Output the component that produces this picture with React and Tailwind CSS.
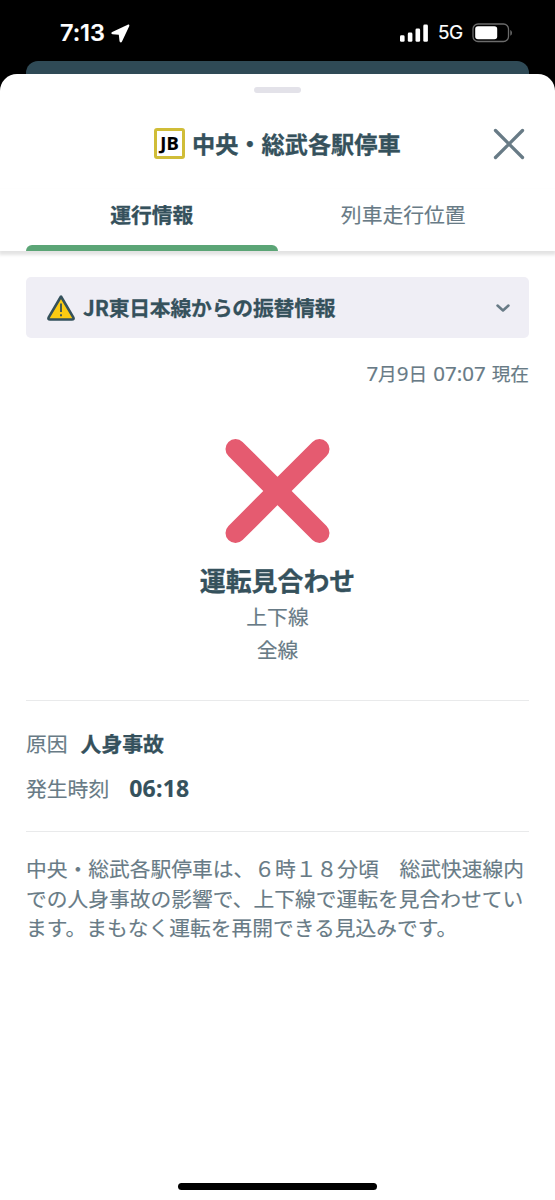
const SERVICE = {
  code: "JB",
  name: "中央・総武各駅停車",
  status: "運転見合わせ",
  direction: "上下線",
  section: "全線",
  cause: "人身事故",
  time: "06:18",
  detail:
    "中央・総武各駅停車は、６時１８分頃　総武快速線内での人身事故の影響で、上下線で運転を見合わせています。まもなく運転を再開できる見込みです。",
};

function StatusBar() {
  return (
    <div className="h-[61px] shrink-0 flex items-start justify-between pl-[60px] pr-[41px] pt-[21px] text-white font-['Inter','Liberation_Sans',sans-serif]">
      <div className="flex items-center h-6 gap-[6px]">
        <span className="w-[45px] text-[23.5px] font-semibold leading-6 tracking-[-0.1px] whitespace-nowrap">7:13</span>
        <svg className="w-[19px] h-[19px]" viewBox="0 0 19 19" fill="currentColor">
          <path d="M16.700.7 1.200 7.900C-.1 8.600.2 10 1.500 10.200L7.800 10.700 8.500 17c.2 1.600 1.800 1.900 2.500.5L18.200 2.200C18.700 1.100 17.900.2 16.700.7Z" />
        </svg>
      </div>
      <div className="flex items-center h-6">
        <svg className="w-[29px] h-[19px]" viewBox="0 0 29 19" fill="currentColor">
          <rect x="0" y="11.300" width="4.600" height="6.500" rx="1.400" />
          <rect x="7.800" y="8.500" width="4.600" height="9.300" rx="1.400" />
          <rect x="15.500" y="4.500" width="4.600" height="13.300" rx="1.400" />
          <rect x="23.300" y="0.500" width="4.600" height="17.300" rx="1.400" />
        </svg>
        <span className="ml-[9px] text-[19px] leading-6 w-[26px] tracking-[-0.6px]">5G</span>
        <svg className="ml-[8px] w-[42px] h-[20px]" viewBox="0 0 42 20">
          <rect x="1" y="1" width="35.500" height="17.500" rx="5" fill="none" stroke="#6b6b6b" strokeWidth="1.300" />
          <rect x="3.200" y="3.200" width="22" height="13.100" rx="2.800" fill="#fff" />
          <path d="M38.300 7c2.200.8 2.200 5 0 5.800Z" fill="#6b6b6b" />
        </svg>
      </div>
    </div>
  );
}

function SheetHeader() {
  return (
    <div className="relative mt-[32px] h-9 flex items-center pl-[154px]">
      <div className="w-[31px] h-[31px] rounded-[3px] border-[3px] border-[#d0bd38] flex items-center justify-center font-['Noto_Sans',sans-serif] text-[18.500px] leading-none font-bold text-black">
        {SERVICE.code}
      </div>
      <h1 className="ml-[7px] text-[23.2px] leading-9 font-bold text-[#35515c] [-webkit-text-stroke:0.3px]">{SERVICE.name}</h1>
      <button className="absolute right-[30px] top-[3px]" aria-label="閉じる">
        <svg className="w-8 h-8" viewBox="0 0 32 32" fill="none" stroke="#687b86" strokeWidth="3.300" strokeLinecap="round">
          <path d="M2.500 2.500 29.500 29.500M29.500 2.500 2.500 29.500" />
        </svg>
      </button>
    </div>
  );
}

function Tabs() {
  return (
    <div className="mt-[28px] h-[62px] px-[26px] grid grid-cols-2 text-[20.800px] text-center shadow-[0_3px_3px_1px_rgba(0,0,0,0.11)]">
      <button className="flex flex-col items-center justify-between">
        <span className="mt-[9px] leading-8 font-bold text-[#35515c] [-webkit-text-stroke:0.3px]">運行情報</span>
        <span className="w-full h-[6px] rounded-t-[6px] bg-[#5ba576]" />
      </button>
      <button className="flex flex-col items-center">
        <span className="mt-[9px] leading-8 text-[#687b86]">列車走行位置</span>
      </button>
    </div>
  );
}

function TransferBanner() {
  return (
    <button className="mt-[26px] w-full h-[61px] rounded-[5px] bg-[#efeef5] flex items-center pl-5 pr-[18px]">
      <svg className="w-[30px] h-[28px]" viewBox="0 0 30 28">
        <path d="M15 2.500 2.700 23.300c-.8 1.400-.1 2.200 1.300 2.200h22c1.400 0 2.100-.8 1.300-2.200Z" fill="#fbcb13" stroke="#35515c" strokeWidth="2.600" strokeLinejoin="round" />
        <path d="M15 9.500v8.500M15 20.300v2" stroke="#35515c" strokeWidth="1.800" />
      </svg>
      <span className="ml-[7px] -mt-px text-[20.800px] leading-8 tracking-[-0.18px] font-bold text-[#35515c] [-webkit-text-stroke:0.3px]">
        JR東日本線からの振替情報
      </span>
      <svg className="ml-auto w-4 h-4" viewBox="0 0 16 16" fill="none" stroke="#687b86" strokeWidth="2.500" strokeLinecap="round" strokeLinejoin="round">
        <path d="m2.500 5.500 5.500 5 5.500-5" />
      </svg>
    </button>
  );
}

export default function App() {
  return (
    <div className="w-[555px] h-[1200px] bg-black flex flex-col overflow-hidden font-['Noto_Sans_CJK_JP',sans-serif] text-[20.800px] text-[#687b86] [-webkit-text-stroke:0.15px]">
      <StatusBar />
      <div className="mx-[26px] h-[13px] shrink-0 rounded-t-[12px] bg-[#2f4a56]" />
      <main className="flex-1 bg-white rounded-t-[17px] flex flex-col">
        <div className="mt-[13px] mx-auto w-[47px] h-[6px] shrink-0 rounded-full bg-[#e3e2e9]" />
        <SheetHeader />
        <Tabs />

        <div className="px-[26px] flex flex-col">
          <TransferBanner />
          <p className="mt-[19px] h-8 flex items-center justify-end text-[18.700px] whitespace-pre">
            <span className="font-['Noto_Sans',sans-serif] text-[20.500px]">7</span>月
            <span className="font-['Noto_Sans',sans-serif] text-[20.500px]">9</span>日
            <span className="ml-[6px] mr-[6px] font-['Noto_Sans',sans-serif] text-[20.500px]">07:07</span>現在
          </p>

          <section className="mt-[50px] flex flex-col items-center">
            <svg className="w-[105px] h-[105px]" viewBox="0 0 105 105" fill="none" stroke="#e55b70" strokeWidth="20" strokeLinecap="round">
              <path d="M10.500 10 94.500 94M94.500 10 10.500 94" />
            </svg>
            <h2 className="mt-[18px] text-[25.900px] leading-9 font-bold text-[#35515c] [-webkit-text-stroke:0.3px]">{SERVICE.status}</h2>
            <p className="mt-[2px] leading-[33px]">{SERVICE.direction}</p>
            <p className="leading-[33px]">{SERVICE.section}</p>
          </section>

          <section className="mt-[34px] h-[132px] border-y border-[#e9eaeb]">
            <p className="mt-[27px] h-8 flex items-center gap-[13px]">
              原因<span className="font-bold text-[#35515c] [-webkit-text-stroke:0.3px]">{SERVICE.cause}</span>
            </p>
            <p className="mt-[13px] h-8 flex items-center gap-[20px]">
              発生時刻
              <span className="-mt-px font-['Noto_Sans',sans-serif] text-[23px] tracking-[0.25px] font-bold text-[#35515c]">{SERVICE.time}</span>
            </p>
          </section>

          <p className="mt-[22px] w-[505px] leading-[29.500px] text-[20.760px]">{SERVICE.detail}</p>
        </div>

        <div className="mt-auto mb-[10px] mx-auto w-[199px] h-[7px] shrink-0 rounded-full bg-black" />
      </main>
    </div>
  );
}
